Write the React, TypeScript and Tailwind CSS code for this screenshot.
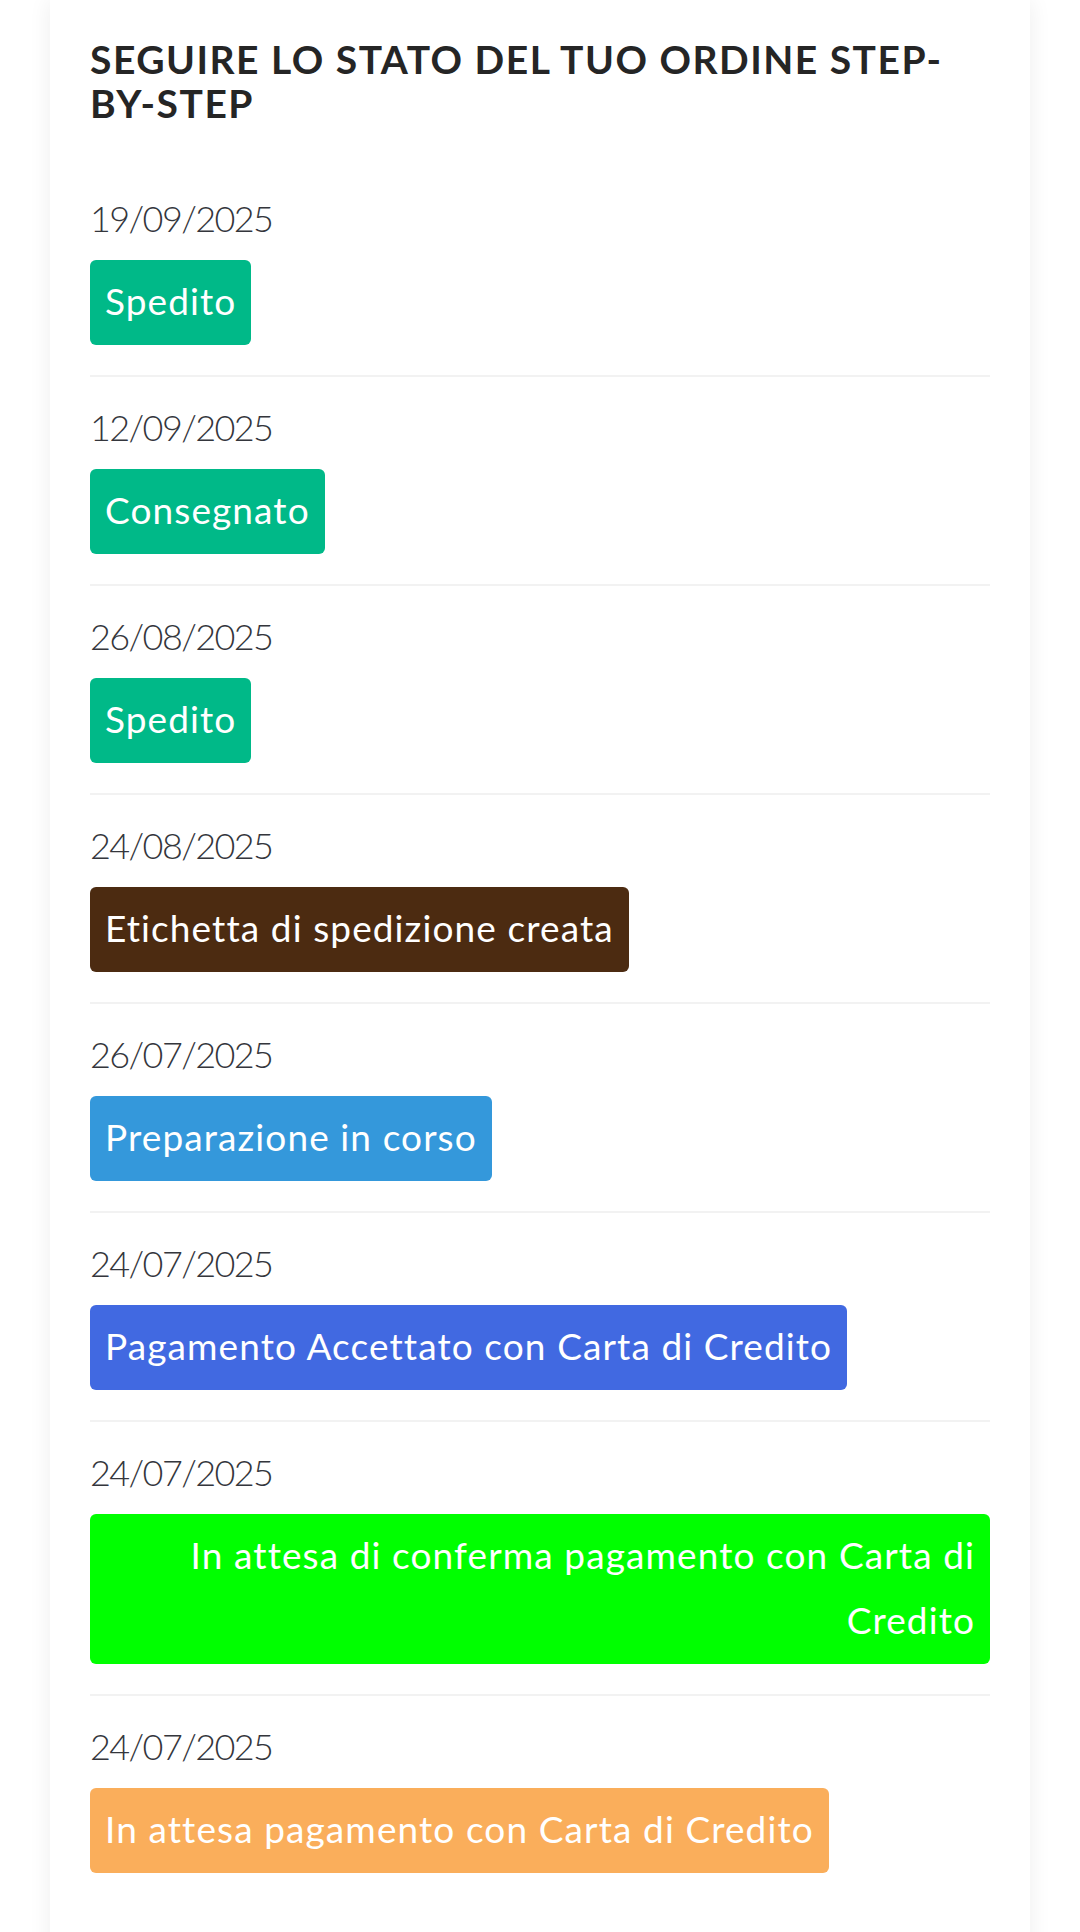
const steps = [
  { date: "19/09/2025", label: "Spedito", color: "bg-[#00b988]" },
  { date: "12/09/2025", label: "Consegnato", color: "bg-[#00b988]" },
  { date: "26/08/2025", label: "Spedito", color: "bg-[#00b988]" },
  { date: "24/08/2025", label: "Etichetta di spedizione creata", color: "bg-[#4c2b11]" },
  { date: "26/07/2025", label: "Preparazione in corso", color: "bg-[#3498db]" },
  { date: "24/07/2025", label: "Pagamento Accettato con Carta di Credito", color: "bg-[#4169e1]" },
  { date: "24/07/2025", label: "In attesa di conferma pagamento con Carta di Credito", color: "bg-[#00ff00]" },
  { date: "24/07/2025", label: "In attesa pagamento con Carta di Credito", color: "bg-[#faae5b]" },
];

export default function App() {
  return (
    <div className="min-h-screen bg-white px-[50px] font-[Lato,sans-serif]">
      <div className="bg-white px-10 pt-[37px] pb-[80px] shadow-[0_0_22px_rgba(0,0,0,0.07)]">
        <h2 className="mb-[43px] text-[39px] font-bold uppercase leading-[44px] tracking-[1.5px] text-[#252525]">
          Seguire lo stato del tuo ordine step-by-step
        </h2>

        <ul>
          {steps.map((step, i) => (
            <li
              key={i}
              className="border-b-2 border-[#f2f2f2] pt-[28px] pb-[30px] last:border-b-0"
            >
              <p className="text-[36px] font-light leading-[44px] tracking-[-1.6px] text-[#34363c]">
                {step.date}
              </p>
              <span
                className={`mt-5 inline-block rounded-[6px] px-[15px] pt-[8px] pb-[12px] text-right text-[37px] leading-[65px] tracking-[1.1px] text-white ${step.color}`}
              >
                {step.label}
              </span>
            </li>
          ))}
        </ul>
      </div>
    </div>
  );
}
